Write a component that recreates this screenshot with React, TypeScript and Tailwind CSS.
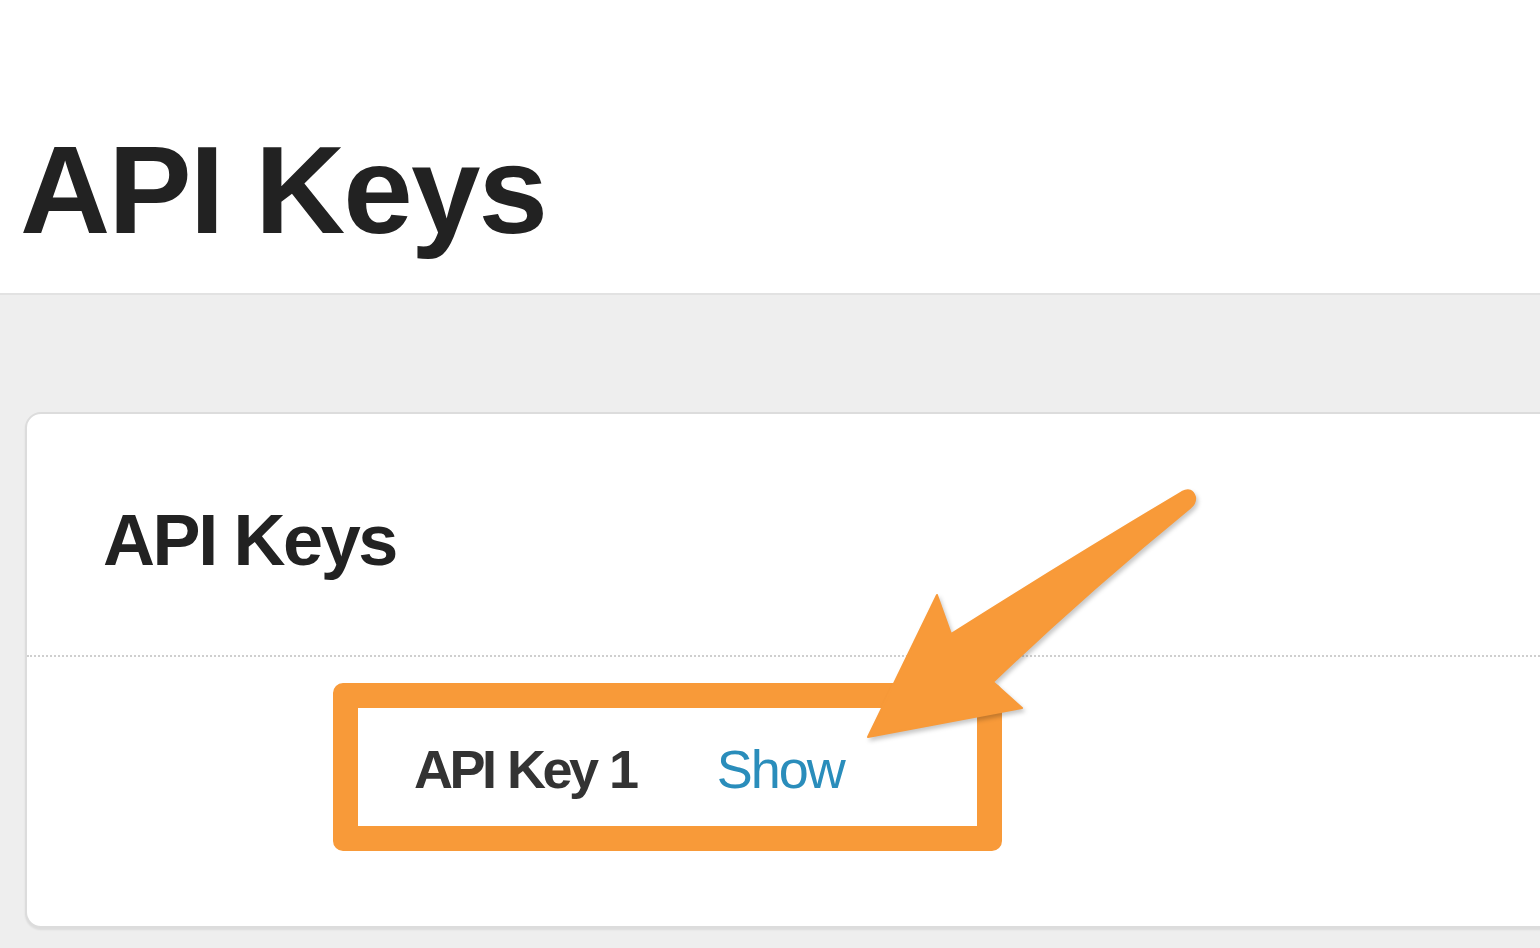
import React from "react";

const font = { fontFamily: '"Liberation Sans", Arial, Helvetica, sans-serif' };

function Arrow() {
    return (
        <svg
            className="absolute inset-0 pointer-events-none drop-shadow-[2px_3px_2px_rgba(0,0,0,0.22)]"
            width={1540}
            height={948}
            viewBox="0 0 1540 948"
        >
            <path
                d="M868,737 L937,595 L951,634 Q1068,560 1182,492 Q1192,487 1195,497 Q1196,503 1190,508 Q1086,593 993,682 L1022,708 Z"
                fill="#f89a39"
                stroke="#f89a39"
                strokeWidth={2}
                strokeLinejoin="round"
            />
        </svg>
    );
}

export default function App() {
    return (
        <div className="relative w-[1540px] h-[948px] overflow-hidden bg-[#eeeeee]" style={font}>
            <header className="h-[295px] bg-white border-b-2 border-[#e2e2e2] pt-[127px] pl-[20px]">
                <h1 className="text-[125px] leading-none font-bold tracking-[-2px] text-[#222]">API Keys</h1>
            </header>

            <div className="pt-[117px] pl-[25px]">
                <section className="w-[1560px] h-[516px] bg-white border-2 border-[#dcdcdc] rounded-[16px] shadow-[0_2px_2px_rgba(0,0,0,0.08)]">
                    <h2 className="pt-[90px] pl-[76px] text-[72px] leading-none font-bold tracking-[-2.4px] text-[#222]">
                        API Keys
                    </h2>
                    <div className="mt-[79px] border-t-2 border-dotted border-[#cfcfcf]" />
                    <div className="pt-[26px] pl-[306px]">
                        <div className="w-[669px] h-[168px] border-[25px] border-[#f89a39] rounded-[10px] pt-[34px] pl-[56px] flex items-start">
                            <span className="text-[54px] leading-none font-bold tracking-[-3.5px] [word-spacing:2px] text-[#333]">API Key 1</span>
                            <a className="ml-[81px] text-[54px] leading-none tracking-[-2px] text-[#2a8dbb]">Show</a>
                        </div>
                    </div>
                </section>
            </div>

            <Arrow />
        </div>
    );
}
